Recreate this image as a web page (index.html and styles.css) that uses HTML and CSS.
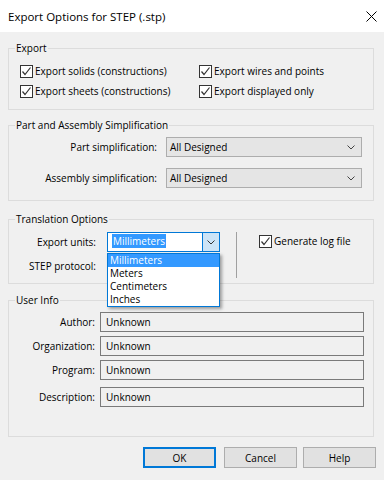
FILE: index.html
```html
<!DOCTYPE html>
<html lang="en">

<head>
    <meta charset="UTF-8">
    <meta name="viewport" content="width=device-width, initial-scale=1.0">
    <title>Export Options for STEP (.stp)</title>
    <link rel="stylesheet" href="styles.css">
</head>

<body>
    <div class="dialog">
        <div class="titlebar">
            <span class="title">Export Options for STEP (.stp)</span>
            <svg class="close" width="11" height="11" viewBox="0 0 11 11">
                <path d="M0.5 0.5L10.5 10.5M10.5 0.5L0.5 10.5" stroke="#000" stroke-width="1" fill="none" />
            </svg>
        </div>

        <div class="body">
            <!-- Export -->
            <fieldset class="group group-export">
                <legend>Export</legend>
                <div class="check-grid">
                    <label class="check"><span class="box"><svg width="11" height="11" viewBox="0 0 11 11"><path d="M1.5 5.5L4 8.5L9.5 1.5" stroke="#333" stroke-width="1.2" fill="none" /></svg></span>Export solids (constructions)</label>
                    <label class="check"><span class="box"><svg width="11" height="11" viewBox="0 0 11 11"><path d="M1.5 5.5L4 8.5L9.5 1.5" stroke="#333" stroke-width="1.2" fill="none" /></svg></span>Export wires and points</label>
                    <label class="check"><span class="box"><svg width="11" height="11" viewBox="0 0 11 11"><path d="M1.5 5.5L4 8.5L9.5 1.5" stroke="#333" stroke-width="1.2" fill="none" /></svg></span>Export sheets (constructions)</label>
                    <label class="check"><span class="box"><svg width="11" height="11" viewBox="0 0 11 11"><path d="M1.5 5.5L4 8.5L9.5 1.5" stroke="#333" stroke-width="1.2" fill="none" /></svg></span>Export displayed only</label>
                </div>
            </fieldset>

            <!-- Part and Assembly Simplification -->
            <fieldset class="group group-simplify">
                <legend>Part and Assembly Simplification</legend>
                <div class="simplify-grid">
                    <span class="lbl">Part simplification:</span>
                    <div class="select"><span>All Designed</span><svg width="8" height="5" viewBox="0 0 8 5"><path d="M0.5 0.5L4 4L7.5 0.5" stroke="#444" fill="none" /></svg></div>
                    <span class="lbl">Assembly simplification:</span>
                    <div class="select"><span>All Designed</span><svg width="8" height="5" viewBox="0 0 8 5"><path d="M0.5 0.5L4 4L7.5 0.5" stroke="#444" fill="none" /></svg></div>
                </div>
            </fieldset>

            <!-- Translation Options -->
            <fieldset class="group group-translate">
                <legend>Translation Options</legend>
                <div class="translate-row">
                    <div class="units-grid">
                        <span class="lbl">Export units:</span>
                        <div class="combo-wrap">
                            <div class="combo open">
                                <span class="combo-text"><span class="sel">Millimeters</span></span>
                                <span class="combo-btn"><svg width="8" height="5" viewBox="0 0 8 5"><path d="M0.5 0.5L4 4L7.5 0.5" stroke="#333" fill="none" /></svg></span>
                            </div>
                            <ul class="dropdown">
                                <li class="active">Millimeters</li>
                                <li>Meters</li>
                                <li>Centimeters</li>
                                <li>Inches</li>
                            </ul>
                        </div>
                        <span class="lbl">STEP protocol:</span>
                        <div class="select"></div>
                    </div>
                    <div class="vsep"></div>
                    <label class="check check-log"><span class="box"><svg width="11" height="11" viewBox="0 0 11 11"><path d="M1.5 5.5L4 8.5L9.5 1.5" stroke="#333" stroke-width="1.2" fill="none" /></svg></span>Generate log file</label>
                </div>
            </fieldset>

            <!-- User Info -->
            <fieldset class="group group-user">
                <legend>User Info</legend>
                <div class="user-grid">
                    <span class="lbl">Author:</span>
                    <div class="field">Unknown</div>
                    <span class="lbl">Organization:</span>
                    <div class="field">Unknown</div>
                    <span class="lbl">Program:</span>
                    <div class="field">Unknown</div>
                    <span class="lbl last">Description:</span>
                    <div class="field last">Unknown</div>
                </div>
            </fieldset>

            <div class="buttons">
                <button class="btn btn-default">OK</button>
                <button class="btn btn-cancel">Cancel</button>
                <button class="btn">Help</button>
            </div>
        </div>
    </div>
</body>

</html>
```

FILE: styles.css
```css
body {
    margin: 0;
    font-family: "Open Sans", "Liberation Sans", sans-serif;
    font-size: 10px;
    color: #000;
    background-color: #f0f0f0;
}

.dialog {
    width: 384px;
    height: 480px;
    background-color: #f0f0f0;
    overflow: hidden;
}

/* title bar */
.titlebar {
    height: 32px;
    background-color: #fff;
    display: flex;
    align-items: center;
    justify-content: space-between;
    padding: 0 8px 0 8px;
}

.title {
    font-size: 11.5px;
}

.close {
    margin-right: -1px;
}

.body {
    padding: 0 8px;
}

/* group boxes */
.group {
    width: 366px;
    box-sizing: border-box;
    min-width: 0;
    margin: 0;
    padding: 0;
    border: 1px solid #dcdcdc;
}

.group legend {
    margin-left: 6px;
    padding: 0 1px;
    line-height: 16px;
}

.group-export {
    margin-top: 8px;
}

.group-simplify {
    margin-top: 7px;
}

.group-translate {
    margin-top: 10px;
}

.group-user {
    margin-top: 8px;
}

/* checkboxes */
.check-grid {
    display: grid;
    grid-template-columns: 179px 1fr;
    padding: 5px 0 8px 11px;
}

.check {
    display: flex;
    align-items: center;
    gap: 2px;
    height: 20px;
    white-space: nowrap;
}

.box {
    width: 13px;
    height: 13px;
    box-sizing: border-box;
    border: 1px solid #333;
    background-color: #fff;
    display: flex;
    align-items: center;
    justify-content: center;
}

.lbl {
    text-align: right;
    line-height: 20px;
    white-space: nowrap;
}

/* selects */
.simplify-grid {
    display: grid;
    grid-template-columns: 148px 196px;
    column-gap: 9px;
    row-gap: 11px;
    padding: 4px 0 12px 0;
}

.select {
    height: 20px;
    box-sizing: border-box;
    border: 1px solid #adadad;
    background-color: #e5e5e5;
    display: flex;
    align-items: center;
    justify-content: space-between;
    padding: 0 6px 0 3px;
}

/* translation options */
.translate-row {
    display: flex;
    align-items: flex-start;
    padding: 5px 0 5px 0;
}

.units-grid {
    display: grid;
    grid-template-columns: 87px 113px;
    column-gap: 11px;
    row-gap: 4px;
}

.combo-wrap {
    position: relative;
}

.combo {
    height: 20px;
    box-sizing: border-box;
    border: 1px solid #0078d7;
    background-color: #fff;
    display: flex;
}

.combo-text {
    flex: 1;
    padding: 1px 0 0 4px;
    line-height: 14px;
}

.sel {
    display: inline-block;
    background-color: #3399ff;
    color: #fff;
    padding: 0 1px;
    line-height: 14px;
}

.combo-btn {
    width: 16px;
    border-left: 1px solid #0078d7;
    background-color: #cce4f7;
    display: flex;
    align-items: center;
    justify-content: center;
}

.dropdown {
    position: absolute;
    top: 21px;
    left: 0;
    width: 113px;
    box-sizing: border-box;
    margin: 0;
    padding: 0;
    list-style: none;
    border: 1px solid #0078d7;
    background-color: #fff;
    box-shadow: 2px 2px 3px rgba(0, 0, 0, 0.35);
    z-index: 2;
}

.dropdown li {
    height: 13px;
    line-height: 13px;
    padding-left: 2px;
}

.dropdown li.active {
    background-color: #3399ff;
    color: #fff;
}

.vsep {
    width: 1px;
    height: 46px;
    background-color: #a0a0a0;
    margin-left: 16px;
}

.check-log {
    margin-left: 22px;
    height: 18px;
}

/* user info */
.user-grid {
    display: grid;
    grid-template-columns: 86px 264px;
    column-gap: 5px;
    row-gap: 4px;
    padding: 4px 0 29px 0;
}

.field {
    height: 20px;
    box-sizing: border-box;
    border: 1px solid #7a7a7a;
    background-color: #f0f0f0;
    padding-left: 5px;
    line-height: 18px;
}

.user-grid .last {
    margin-top: 3px;
}

/* buttons */
.buttons {
    display: flex;
    justify-content: flex-end;
    margin-top: 10px;
}

.btn {
    width: 73px;
    height: 21px;
    box-sizing: border-box;
    border: 1px solid #adadad;
    background-color: #e1e1e1;
    font-family: inherit;
    font-size: 10px;
    color: #000;
    padding: 0;
}

.btn-default {
    border: 2px solid #0078d7;
}

.btn-cancel {
    margin: 0 6px 0 8px;
}
```
